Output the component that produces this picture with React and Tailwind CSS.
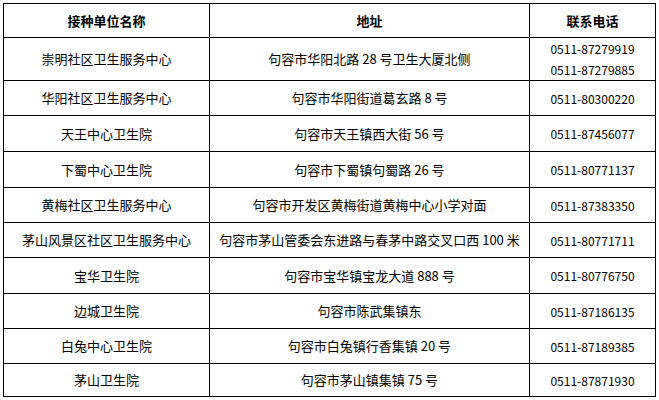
import React from 'react';

const rows = [
    { name: '崇明社区卫生服务中心', addr: '句容市华阳北路 28 号卫生大厦北侧', phones: ['0511-87279919', '0511-87279885'], h: 'h-[43px]' },
    { name: '华阳社区卫生服务中心', addr: '句容市华阳街道葛玄路 8 号', phones: ['0511-80300220'], h: 'h-[35px]' },
    { name: '天王中心卫生院', addr: '句容市天王镇西大街 56 号', phones: ['0511-87456077'], h: 'h-[36px]' },
    { name: '下蜀中心卫生院', addr: '句容市下蜀镇句蜀路 26 号', phones: ['0511-80771137'], h: 'h-[36px]' },
    { name: '黄梅社区卫生服务中心', addr: '句容市开发区黄梅街道黄梅中心小学对面', phones: ['0511-87383350'], h: 'h-[35px]' },
    { name: '茅山风景区社区卫生服务中心', addr: '句容市茅山管委会东进路与春茅中路交叉口西 100 米', phones: ['0511-80771711'], h: 'h-[35px]' },
    { name: '宝华卫生院', addr: '句容市宝华镇宝龙大道 888 号', phones: ['0511-80776750'], h: 'h-[36px]' },
    { name: '边城卫生院', addr: '句容市陈武集镇东', phones: ['0511-87186135'], h: 'h-[35px]' },
    { name: '白兔中心卫生院', addr: '句容市白兔镇行香集镇 20 号', phones: ['0511-87189385'], h: 'h-[35px]' },
    { name: '茅山卫生院', addr: '句容市茅山镇集镇 75 号', phones: ['0511-87871930'], h: 'h-[33px]' },
];

const cell = 'border border-black text-center align-middle p-0 leading-[16px]';

export default function App() {
    return (
        <div className="w-[659px] h-[400px] bg-white pt-[3px] pl-[3px] text-black text-[13px] font-['Noto_Sans_CJK_SC','Noto_Sans',sans-serif]">
            <table className="table-fixed border-collapse w-[652px]">
                <colgroup>
                    <col className="w-[206px]" />
                    <col className="w-[320px]" />
                    <col className="w-[126px]" />
                </colgroup>
                <thead>
                    <tr>
                        <th className={`${cell} h-[34px] font-bold`}>接种单位名称</th>
                        <th className={`${cell} h-[34px] font-bold`}>地址</th>
                        <th className={`${cell} h-[34px] font-bold`}>联系电话</th>
                    </tr>
                </thead>
                <tbody>
                    {rows.map((r) => (
                        <tr key={r.name}>
                            <td className={`${cell} ${r.h}`}>{r.name}</td>
                            <td className={`${cell} ${r.h} whitespace-nowrap`}>{r.addr}</td>
                            <td className={`${cell} ${r.h} text-[12px]`}>
                                {r.phones.map((p) => (
                                    <div key={p} className="leading-[21px]">{p}</div>
                                ))}
                            </td>
                        </tr>
                    ))}
                </tbody>
            </table>
        </div>
    );
}
